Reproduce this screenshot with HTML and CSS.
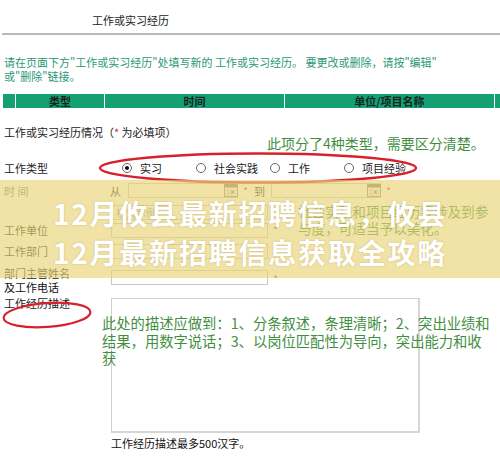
FILE: index.html
```html
<!DOCTYPE html>
<html lang="zh-CN">
<head>
<meta charset="utf-8">
<title>工作或实习经历</title>
<link rel="stylesheet" href="styles.css">
</head>
<body>
<div class="page">
  <div class="head-title">工作或实习经历</div>
  <div class="rule"></div>
  <p class="notice">请在页面下方"工作或实习经历"处填写新的 工作或实习经历。 要更改或删除，请按"编辑"<br>或"删除"链接。</p>

  <div class="thead">
    <div class="th c0"></div>
    <div class="th c1">类型</div>
    <div class="th c2">时间</div>
    <div class="th c3">单位/项目名称</div>
    <div class="th c4"></div>
  </div>

  <div class="form">
    <div class="caption">工作或实习经历情况（<span class="req">*</span> 为必填项）</div>

    <div class="row type-row">
      <span class="label w-type">工作类型</span>
      <div class="radios">
        <span class="opt"><span class="radio checked"></span>实习</span>
        <span class="opt"><span class="radio"></span>社会实践</span>
        <span class="opt"><span class="radio"></span>工作</span>
        <span class="opt"><span class="radio"></span>项目经验</span>
      </div>
    </div>

    <div class="row time-row">
      <span class="label w-time muted">时 间</span>
      <span class="from">从</span>
      <span class="date">
        <svg class="cal" viewBox="0 0 14 13" width="14" height="13"><rect x="0.5" y="0.5" width="13" height="12" fill="#fff" stroke="#888"/><rect x="0.5" y="0.5" width="13" height="3" fill="#777"/><path d="M1 6.5H13M1 9.5H13M4 4V12M7 4V12M10 4V12" stroke="#bbb" stroke-width="0.8"/><rect x="7.5" y="7" width="2" height="2" fill="#d33"/></svg>
      </span>
      <span class="req star">*</span>
      <span class="to">到</span>
      <span class="date">
        <svg class="cal" viewBox="0 0 14 13" width="14" height="13"><rect x="0.5" y="0.5" width="13" height="12" fill="#fff" stroke="#888"/><rect x="0.5" y="0.5" width="13" height="3" fill="#777"/><path d="M1 6.5H13M1 9.5H13M4 4V12M7 4V12M10 4V12" stroke="#bbb" stroke-width="0.8"/><rect x="7.5" y="7" width="2" height="2" fill="#d33"/></svg>
      </span>
      <span class="req star">*</span>
    </div>

    <div class="row hint-row">
      <span class="label w-field"></span>
      <span class="box hint">格式示例</span>
    </div>

    <div class="row">
      <span class="label w-field">工作单位</span>
      <span class="box"></span>
      <span class="req star">*</span>
    </div>

    <div class="row">
      <span class="label w-field">工作部门</span>
      <span class="box"></span>
    </div>

    <div class="row two-line">
      <span class="label w-field">部门主管姓名<br><span class="dark">及工作电话</span></span>
      <span class="box box-low"></span>
      <span class="req star star-low">*</span>
    </div>

    <div class="row desc-row">
      <span class="label w-field">工作经历描述</span>
      <span class="textarea"></span>
    </div>

    <div class="limit">工作经历描述最多500汉字。</div>
  </div>

  <div class="note note-type">此项分了4种类型，需要区分清楚。</div>
  <div class="note note-social">社会实践和项目经历要涉及到参<br>与度，可适当予以美化。</div>
  <div class="note note-desc">此处的描述应做到：1、分条叙述，条理清晰；2、突出业绩和<br>结果，用数字说话；3、以岗位匹配性为导向，突出能力和收<br>获</div>

  <svg class="marks" viewBox="0 0 500 458" width="500" height="458">
    <ellipse cx="258" cy="168" rx="158" ry="14.5" fill="none" stroke="#d8202c" stroke-width="2.4"/>
    <ellipse cx="47" cy="315" rx="43.5" ry="12" fill="none" stroke="#d8202c" stroke-width="2.2" transform="rotate(-4 47 315)"/>
  </svg>

  <div class="band">
    <h1 class="band-title">12月攸县最新招聘信息，攸县<br>12月最新招聘信息获取全攻略</h1>
  </div>
</div>
</body>
</html>
```

FILE: styles.css
```css
* { box-sizing: border-box; }

html, body {
  margin: 0;
  padding: 0;
  background: #fff;
}

body {
  font-family: "Noto Sans CJK SC", "Noto Sans", sans-serif;
  font-size: 11px;
  color: #1a1a1a;
}

.page {
  position: relative;
  width: 500px;
  height: 458px;
  overflow: hidden;
}

.head-title {
  height: 33px;
  padding: 13px 0 0 92px;
  line-height: 14px;
  font-size: 11px;
  color: #222;
}

.rule {
  height: 2px;
  margin-left: 2px;
  background: #b9b9b9;
}

.notice {
  margin: 0;
  padding: 20px 0 0 4px;
  font-size: 11px;
  line-height: 14px;
  color: #2a9878;
  white-space: nowrap;
}

.thead {
  display: flex;
  gap: 1px;
  height: 14px;
  margin-top: 11px;
  padding-left: 3px;
}

.th {
  background: #15a074;
  color: #16241c;
  font-weight: bold;
  font-size: 11px;
  line-height: 14px;
  text-align: center;
}

.c0 { width: 12px; }
.c1 { width: 88px; }
.c2 { width: 179px; }
.c3 { width: 209px; }
.c4 { flex: 1; }

.form {
  padding-left: 4px;
}

.caption {
  margin-top: 17px;
  line-height: 14px;
}

.req { color: #d8202c; }

.row {
  display: flex;
  align-items: center;
  line-height: 14px;
}

.label { flex: none; }
.w-type { width: 118px; }
.w-time { width: 106px; }
.w-field { width: 107px; }

.muted { color: #777; }

.type-row {
  margin-top: 22px;
  height: 14px;
}

.radios { display: flex; }

.opt {
  display: flex;
  align-items: center;
  width: 74px;
  gap: 8px;
}

.radio {
  width: 10px;
  height: 10px;
  border: 1px solid #666;
  border-radius: 50%;
  background: #fff;
  position: relative;
  flex: none;
}

.radio.checked::after {
  content: "";
  position: absolute;
  left: 2px;
  top: 2px;
  width: 4px;
  height: 4px;
  border-radius: 50%;
  background: #111;
}

.time-row {
  margin-top: 7px;
  height: 17px;
}

.from { width: 18px; }
.to { width: 17px; margin-left: 1px; }

.date {
  width: 110px;
  height: 15px;
  border: 1px solid #c8c8c8;
  background: #fff;
  display: flex;
  justify-content: flex-end;
  align-items: center;
}

.cal { margin-right: -1px; }

.star {
  display: inline-block;
  width: 15px;
  text-align: center;
  font-size: 10px;
}

.hint-row {
  margin-top: 3px;
  height: 20px;
}

.box {
  width: 157px;
  height: 15px;
  border: 1px solid #c8c8c8;
  background: #fff;
}

.hint {
  color: #999;
  font-size: 10px;
  line-height: 13px;
  padding-left: 4px;
}

.hint-row + .row { height: 16px; }
.hint-row + .row + .row { height: 16px; margin-top: 5px; }

.two-line {
  margin-top: 7px;
  height: 28px;
  align-items: flex-start;
}

.dark { color: #111; }

.box-low { margin-top: 4px; }
.star-low { margin-top: 6px; }

.desc-row {
  margin-top: 4px;
  align-items: flex-start;
}

.desc-row .label { margin-top: -2px; }

.textarea {
  width: 309px;
  height: 135px;
  border: 1px solid #cfcfcf;
  border-right: 2px solid #d6d6d6;
  border-bottom: 2px solid #d6d6d6;
  background: #fff;
}

.limit {
  margin-top: 3px;
  padding-left: 107px;
  line-height: 14px;
  color: #111;
}

.note {
  position: absolute;
  color: #3f8f3f;
  font-size: 14px;
  white-space: nowrap;
}

.note-type {
  left: 267px;
  top: 134px;
  line-height: 18px;
  font-size: 14px;
}

.note-social {
  left: 298px;
  top: 203px;
  line-height: 17px;
  font-size: 13.6px;
}

.note-desc {
  left: 102px;
  top: 314px;
  line-height: 17.5px;
  font-size: 14.3px;
}

.marks {
  position: absolute;
  left: 0;
  top: 0;
  pointer-events: none;
}

.band {
  position: absolute;
  left: 0;
  top: 180px;
  width: 500px;
  height: 98px;
  background: rgba(232, 212, 118, 0.66);
  padding-top: 14px;
}

.band-title {
  margin: 0;
  text-align: center;
  color: #fff;
  font-size: 28px;
  line-height: 39px;
  font-weight: bold;
  letter-spacing: 1.8px;
  text-shadow: 0 0 2px rgba(120, 100, 40, 0.35);
}
```
